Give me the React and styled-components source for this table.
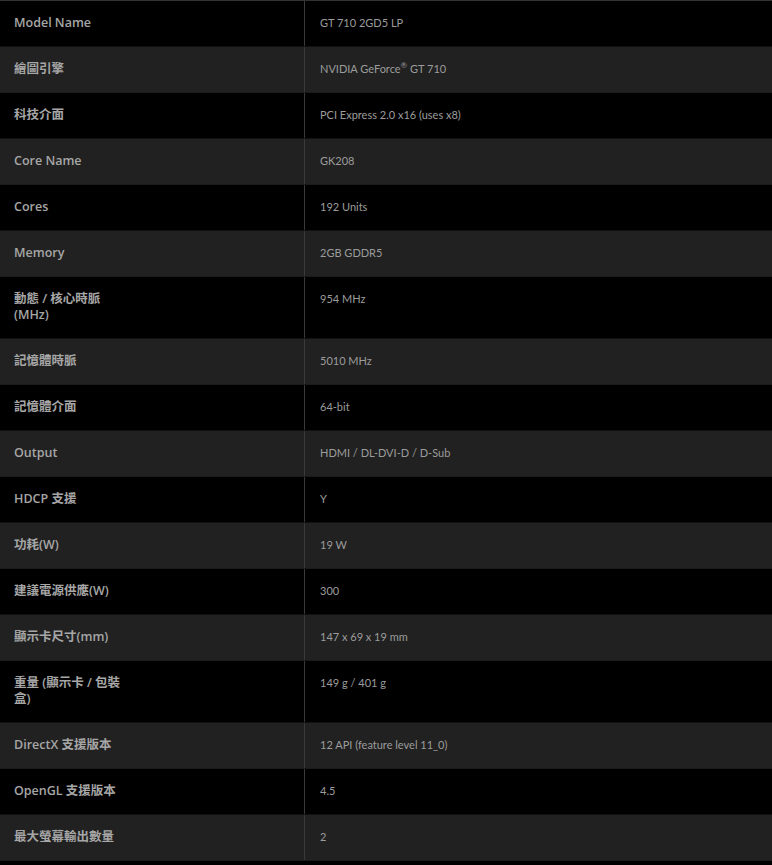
import React from 'react'
import styled, { createGlobalStyle } from 'styled-components'

const GlobalStyle = createGlobalStyle`
  body {
    margin: 0;
    background: #000;
  }
`

const SpecTable = styled.div`
  width: 772px;
  border-top: 1px solid #333;
  display: flex;
  flex-direction: column;
`

const SpecRow = styled.div`
  display: grid;
  grid-template-columns: 305px 1fr;
  background-color: ${p => (p.$alt ? '#212121' : '#000')};
  border-bottom: 1px solid ${p => (p.$alt ? '#1b1b1b' : '#111')};
`

const SpecLabel = styled.div`
  padding: 14px 14px 15px;
  border-right: 1px solid #3a3a3a;
  font-family: "Open Sans", "Noto Sans CJK TC", sans-serif;
  font-weight: 600;
  font-size: 12.5px;
  line-height: 16px;
  color: #a6a6a6;
`

const LabelText = styled.div`
  max-width: 119px;
`

const SpecValue = styled.div`
  padding: 14px 15px 15px;
  font-family: Lato, "Noto Sans CJK TC", sans-serif;
  font-size: 11px;
  line-height: 16px;
  color: #9c9c9c;
`

const Reg = styled.sup`
  font-size: 8px;
  line-height: 0;
`

const specs = [
  ['Model Name', 'GT 710 2GD5 LP'],
  ['繪圖引擎', <>NVIDIA GeForce<Reg>®</Reg> GT 710</>],
  ['科技介面', 'PCI Express 2.0 x16 (uses x8)'],
  ['Core Name', 'GK208'],
  ['Cores', '192 Units'],
  ['Memory', '2GB GDDR5'],
  ['動態 / 核心時脈 (MHz)', '954 MHz'],
  ['記憶體時脈', '5010 MHz'],
  ['記憶體介面', '64-bit'],
  ['Output', 'HDMI / DL-DVI-D / D-Sub'],
  ['HDCP 支援', 'Y'],
  ['功耗(W)', '19 W'],
  ['建議電源供應(W)', '300'],
  ['顯示卡尺寸(mm)', '147 x 69 x 19 mm'],
  ['重量 (顯示卡 / 包裝盒)', '149 g / 401 g'],
  ['DirectX 支援版本', '12 API (feature level 11_0)'],
  ['OpenGL 支援版本', '4.5'],
  ['最大螢幕輸出數量', '2']
]

export default function App() {
  return (
    <>
      <GlobalStyle />
      <SpecTable>
        {specs.map(([label, value], i) => (
          <SpecRow key={i} $alt={i % 2 === 1}>
            <SpecLabel>
              <LabelText>{label}</LabelText>
            </SpecLabel>
            <SpecValue>{value}</SpecValue>
          </SpecRow>
        ))}
      </SpecTable>
    </>
  )
}
